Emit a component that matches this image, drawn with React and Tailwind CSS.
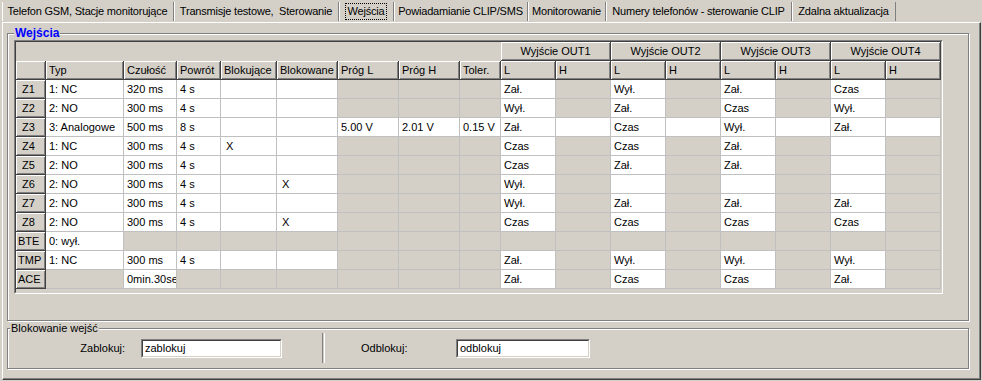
import React from "react";

const tabs = [
  { label: "Telefon GSM, Stacje monitorujące", w: "w-[172px]" },
  { label: "Transmisje testowe,  Sterowanie", w: "w-[165px]" },
  { label: "Wejścia", w: "w-[55px]", active: true },
  { label: "Powiadamianie CLIP/SMS", w: "w-[134px]" },
  { label: "Monitorowanie", w: "w-[78px]" },
  { label: "Numery telefonów - sterowanie CLIP", w: "w-[186px]" },
  { label: "Zdalna aktualizacja", w: "w-[104px]" },
];

const heads = ["", "Typ", "Czułość", "Powrót", "Blokujące", "Blokowane", "Próg L", "Próg H", "Toler.", "L", "H", "L", "H", "L", "H", "L", "H"];

// null = cell disabled (grey)
const rows = [
  ["Z1", "1: NC", "320 ms", "4 s", "", "", null, null, null, "Zał.", null, "Wył.", null, "Zał.", null, "Czas", null],
  ["Z2", "2: NO", "300 ms", "4 s", "", "", null, null, null, "Wył.", null, "Zał.", null, "Czas", null, "Wył.", null],
  ["Z3", "3: Analogowe", "500 ms", "8 s", "", "", "5.00 V", "2.01 V", "0.15 V", "Zał.", "", "Czas", "", "Wył.", "", "Zał.", ""],
  ["Z4", "1: NC", "300 ms", "4 s", "X", "", null, null, null, "Czas", null, "Czas", null, "Zał.", null, "", null],
  ["Z5", "2: NO", "300 ms", "4 s", "", "", null, null, null, "Czas", null, "Zał.", null, "Zał.", null, "", null],
  ["Z6", "2: NO", "300 ms", "4 s", "", "X", null, null, null, "Wył.", null, "", null, "", null, "", null],
  ["Z7", "2: NO", "300 ms", "4 s", "", "", null, null, null, "Wył.", null, "Zał.", null, "Zał.", null, "Zał.", null],
  ["Z8", "2: NO", "300 ms", "4 s", "", "X", null, null, null, "Czas", null, "Czas", null, "Czas", null, "Czas", null],
  ["BTE", "0: wył.", null, null, null, null, null, null, null, null, null, null, null, null, null, null, null],
  ["TMP", "1: NC", "300 ms", "4 s", "", "", null, null, null, "Zał.", null, "Wył.", null, "Wył.", null, "Wył.", null],
  ["ACE", null, "0min.30sek", null, null, null, null, null, null, "Zał.", null, "Czas", null, "Czas", null, "Zał.", null],
];

const fixed =
  "bg-[#d4d0c8] border-r border-b border-[#404040] shadow-[inset_1px_1px_0_#fff,inset_-1px_-1px_0_#808080] flex items-center whitespace-nowrap overflow-hidden";

const Etched = ({ className, children }) => (
  <div className={`relative border border-[#808080] shadow-[1px_1px_0_#fff,inset_1px_1px_0_#fff] ${className}`}>
    {children}
  </div>
);

const Input = ({ value, w }) => (
  <div className={`${w} h-[19px] border border-t-[#808080] border-l-[#808080] border-r-white border-b-white`}>
    <div className="h-full bg-white border border-t-[#404040] border-l-[#404040] border-r-[#d4d0c8] border-b-[#d4d0c8] pl-[2px] flex items-center">
      {value}
    </div>
  </div>
);

export default function App() {
  return (
    <div className="w-[982px] h-[381px] bg-[#d4d0c8] overflow-hidden font-['Liberation_Sans',Arial,sans-serif] text-[11px] leading-none text-black">
      {/* Tabs */}
      <div className="flex h-[22px] pt-[2px] pl-[2px]">
        {tabs.map((t) => (
          <div
            key={t.label}
            className={`${t.w} h-[19px] flex items-center justify-center border-r border-[#808080] shadow-[inset_1px_0_0_#fff] whitespace-pre tracking-[-0.2px]`}
          >
            {t.active ? (
              <span className="border border-dotted border-black px-[2px] py-[2px]">{t.label}</span>
            ) : (
              t.label
            )}
          </div>
        ))}
      </div>

      {/* Page */}
      <div className="ml-[2px] w-[979px] h-[358px] border border-t-white border-l-white border-r-[#404040] border-b-[#404040] shadow-[inset_-1px_-1px_0_#808080] pt-[10px] pl-[4px]">
        <Etched className="w-[962px] h-[288px]">
          <span className="absolute left-[6px] top-[-7px] px-[1px] bg-[#d4d0c8] text-[#0000ff] font-bold text-[12px]">
            Wejścia
          </span>
          <div className="mt-[6px] ml-[6px] w-[929px] h-[254px] border border-t-[#808080] border-l-[#808080] border-r-white border-b-white">
            <div className="h-full border border-t-[#404040] border-l-[#404040] border-r-[#d4d0c8] border-b-[#d4d0c8]">
              <div className="grid grid-cols-[30px_78px_53px_44px_56px_61px_61px_61px_41px_55px_55px_55px_55px_55px_55px_55px_55px] auto-rows-[19px]">
                <div className="col-span-9" />
                {["Wyjście OUT1", "Wyjście OUT2", "Wyjście OUT3", "Wyjście OUT4"].map((o) => (
                  <div key={o} className={`${fixed} col-span-2 justify-center`}>
                    {o}
                  </div>
                ))}
                {heads.map((h, i) => (
                  <div key={i} className={`${fixed} pl-[3px]`}>
                    {h}
                  </div>
                ))}
                {rows.map((r) => (
                  <React.Fragment key={r[0]}>
                    <div className={`${fixed} ${r[0].length > 2 ? "pl-[2px]" : "pl-[6px]"}`}>{r[0]}</div>
                    {r.slice(1).map((v, i) => (
                      <div
                        key={i}
                        className={`border-r border-b border-[#c0c0c0] flex items-center whitespace-nowrap overflow-hidden ${
                          v === null ? "bg-[#d4d0c8]" : "bg-white"
                        } ${v === "X" ? "pl-[5px]" : "pl-[3px]"}`}
                      >
                        {v}
                      </div>
                    ))}
                  </React.Fragment>
                ))}
              </div>
            </div>
          </div>
        </Etched>

        <Etched className="mt-[7px] w-[962px] h-[41px]">
          <span className="absolute left-[2px] top-[-6px] px-[1px] bg-[#d4d0c8]">Blokowanie wejść</span>
          <div className="flex items-center pt-[4px]">
            <div className="w-[117px] text-right">Zablokuj:</div>
            <div className="ml-[16px]">
              <Input value="zablokuj" w="w-[141px]" />
            </div>
            <div className="ml-[40px] w-[2px] h-[30px] border-l border-[#808080] shadow-[1px_0_0_#fff]" />
            <div className="ml-[37px] w-[95px]">Odblokuj:</div>
            <Input value="odblokuj" w="w-[134px]" />
          </div>
        </Etched>
      </div>
    </div>
  );
}
